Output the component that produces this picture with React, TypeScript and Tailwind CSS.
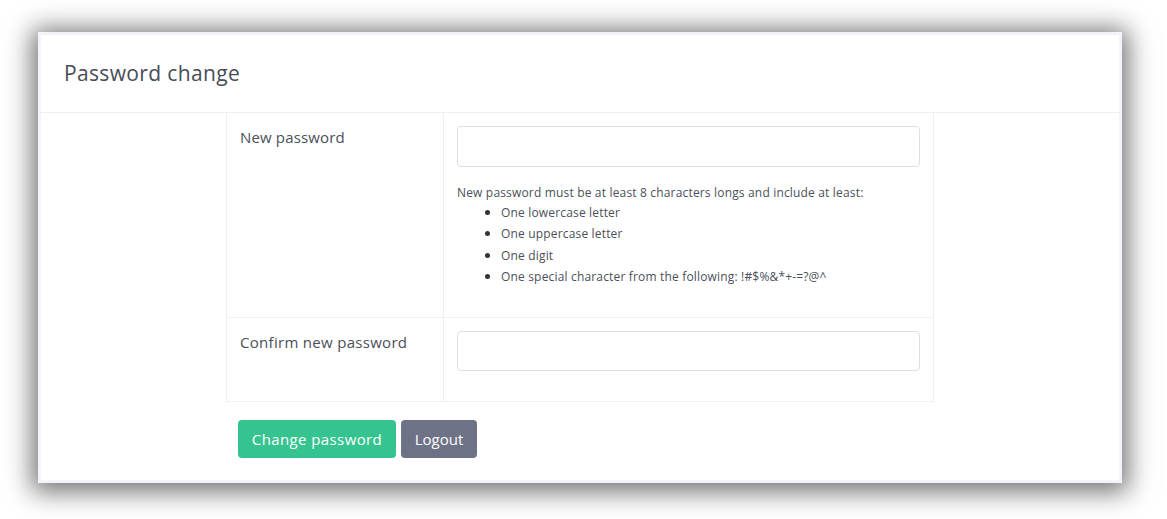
import React from "react";

export default function App() {
  const font = { fontFamily: "'Open Sans', 'Noto Sans', sans-serif" };
  return (
    <div className="w-[1167px] h-[519px] bg-white pt-[32px] pl-[38px]" style={font}>
      <div className="w-[1084px] h-[451px] bg-white border-[3px] border-[#f3f4f9] shadow-[0_3px_24px_6px_rgba(0,0,0,0.55)] flex flex-col">
        <div className="h-[78px] border-b border-[#eef0f4] flex items-center pl-[23px] pt-[1px]">
          <h1 className="text-[21px] font-medium text-[#474d57] tracking-[0.35px]">Password change</h1>
        </div>
        <div className="mx-auto w-[708px]">
          <div className="grid grid-cols-[217px_1fr] border-x border-b border-[#eef0f3] text-[#4a5059]">
            <div className="border-r border-b border-[#eef0f3] px-[13px] pt-[12px] h-[205px]">
              <span className="text-[15px] font-medium tracking-[0.15px]">New password</span>
            </div>
            <div className="border-b border-[#eef0f3] px-[13px] pt-[13px]">
              <div className="h-[41px] rounded-[4px] border border-[#dcdfe4] bg-white" />
              <p className="text-[12px] mt-[17px] leading-[18px] tracking-[0.17px]">
                New password must be at least 8 characters longs and include at least:
              </p>
              <ul className="list-disc pl-[44px] text-[12px] leading-[21.3px] tracking-[0.17px] marker:text-[#333] marker:text-[13px]">
                <li>One lowercase letter</li>
                <li>One uppercase letter</li>
                <li>One digit</li>
                <li>One special character from the following: !#$%&amp;*+-=?@^</li>
              </ul>
            </div>
            <div className="border-r border-[#eef0f3] px-[13px] pt-[12px] h-[83px]">
              <span className="text-[15px] font-medium tracking-[0.3px]">Confirm new password</span>
            </div>
            <div className="px-[13px] pt-[13px]">
              <div className="h-[40px] rounded-[4px] border border-[#dcdfe4] bg-white" />
            </div>
          </div>
          <div className="flex gap-[5px] pl-[12px] mt-[18px]">
            <button className="h-[38px] w-[158px] rounded-[4px] bg-[#35c48f] text-white text-[15px] tracking-[0.4px]">Change password</button>
            <button className="h-[38px] w-[76px] rounded-[4px] bg-[#6e7287] text-white text-[15px]">Logout</button>
          </div>
        </div>
      </div>
    </div>
  );
}
